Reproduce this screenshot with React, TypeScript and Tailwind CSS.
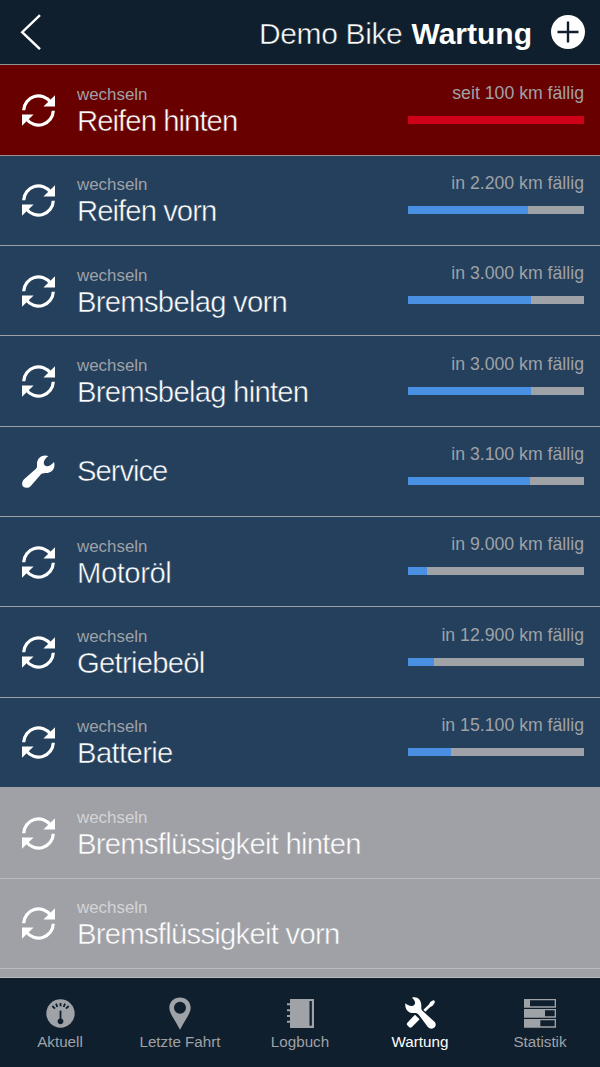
import React from "react";

type Status = "overdue" | "active" | "inactive";

interface Task {
  name: string;
  action?: string;
  due?: string;
  progress?: number;
  status: Status;
  tracking?: string;
}

const tasks: Task[] = [
  { name: "Reifen hinten", action: "wechseln", due: "seit 100 km fällig", progress: 100, status: "overdue", tracking: "tracking-[-0.95px]" },
  { name: "Reifen vorn", action: "wechseln", due: "in 2.200 km fällig", progress: 68, status: "active", tracking: "tracking-[-0.95px]" },
  { name: "Bremsbelag vorn", action: "wechseln", due: "in 3.000 km fällig", progress: 70, status: "active" },
  { name: "Bremsbelag hinten", action: "wechseln", due: "in 3.000 km fällig", progress: 70, status: "active" },
  { name: "Service", due: "in 3.100 km fällig", progress: 69.3, status: "active", tracking: "tracking-[-1.05px]" },
  { name: "Motoröl", action: "wechseln", due: "in 9.000 km fällig", progress: 11, status: "active", tracking: "tracking-[-0.5px]" },
  { name: "Getriebeöl", action: "wechseln", due: "in 12.900 km fällig", progress: 14.5, status: "active" },
  { name: "Batterie", action: "wechseln", due: "in 15.100 km fällig", progress: 24.2, status: "active", tracking: "tracking-[-0.65px]" },
  { name: "Bremsflüssigkeit hinten", action: "wechseln", status: "inactive" },
  { name: "Bremsflüssigkeit vorn", action: "wechseln", status: "inactive" },
];

const rowStyles: Record<Status, string> = {
  overdue: "bg-[#690000] border-[#9b8f92]",
  active: "bg-[#24405c] border-[#9fa2a7]",
  inactive: "bg-[#9fa1a6] border-[#b8babd]",
};

// A stroke in the row colour slims the regular weight down to a light one.
const titleStyles: Record<Status, string> = {
  overdue: "[-webkit-text-stroke:0.5px_#690000]",
  active: "[-webkit-text-stroke:0.5px_#24405c]",
  inactive: "[-webkit-text-stroke:0.5px_#9fa1a6]",
};

function RefreshIcon() {
  return (
    <svg width="33" height="33" viewBox="0 0 33 33" fill="none">
      <path d="M1.7 16.2A14.8 14.8 0 0 1 28.6 8.2" stroke="#fff" strokeWidth="3.2" />
      <path d="M31.3 16.8A14.8 14.8 0 0 1 4.4 24.8" stroke="#fff" strokeWidth="3.2" />
      <path d="M33 1.2V12.4H21.4ZM0 31.8V20.6H11.6Z" fill="#fff" />
    </svg>
  );
}

function WrenchIcon() {
  return (
    <svg width="33" height="33" viewBox="0 0 99 99" fill="#fff">
      <path d="M79 3C66 13 62 24 68 31C75 38 86 32 96 21C101 38 92 52 77 54C68 55 62 53 57 58L27 92C20 100 10 100 4 95C-2 89 0 78 7 72L42 41C46 37 45 32 45 25C46 8 62-3 79 3Z" />
    </svg>
  );
}

function TaskRow({ task }: { task: Task }) {
  return (
    <li className={`flex h-[90.36px] shrink-0 items-center border-b pl-[22px] pr-4 ${rowStyles[task.status]}`}>
      <div className="w-[55px] shrink-0 pt-px">{task.action ? <RefreshIcon /> : <WrenchIcon />}</div>
      <div className="flex flex-1 flex-col">
        {task.action && (
          <span
            className={`mt-px text-[16.9px] leading-5 ${task.status === "inactive" ? "text-[#d3d4d6]" : "text-[#9fa2a7]"}`}
          >
            {task.action}
          </span>
        )}
        <span
          className={`whitespace-nowrap text-[29.3px] text-white ${task.action ? "leading-[31px]" : "leading-8"} ${task.tracking ?? "tracking-[-0.76px]"} ${titleStyles[task.status]}`}
        >
          {task.name}
        </span>
      </div>
      {task.due && (
        <div className="flex w-44 flex-col items-end gap-[13px] self-start pt-[17.3px]">
          <span className="whitespace-nowrap text-[17.7px] leading-5 text-[#9fa2a7]">{task.due}</span>
          <div className="h-2 w-full bg-[#9fa2a7]">
            <div
              className={`h-full ${task.status === "overdue" ? "bg-[#d0021b]" : "bg-[#4a90e2]"}`}
              style={{ width: `${task.progress}%` }}
            />
          </div>
        </div>
      )}
    </li>
  );
}

function GaugeIcon() {
  return (
    <svg width="29" height="29" viewBox="0 0 87 87">
      <circle cx="43.5" cy="43.5" r="42.5" fill="currentColor" />
      <g stroke="#101f2d" strokeWidth="5.5">
        <path d="M43.5 12V22M30 14L34 24M57 14L53 24M19 21L27 29M68 21L60 29" />
        <path d="M43.5 35V68" />
      </g>
      <circle cx="43.5" cy="67" r="8.5" fill="#101f2d" />
    </svg>
  );
}

function PinIcon() {
  return (
    <svg width="22" height="33" viewBox="0 0 66 98">
      <path
        d="M33 1C14 1 1 15 1 32C1 50 19 69 33 98C47 69 65 50 65 32C65 15 52 1 33 1ZM33 14A18 18 0 1 1 33 50A18 18 0 1 1 33 14Z"
        fill="currentColor"
        fillRule="evenodd"
      />
    </svg>
  );
}

function LogbookIcon() {
  return (
    <svg width="27" height="29" viewBox="0 0 81 87">
      <path d="M9 0H81V87H9Z" fill="currentColor" />
      <path d="M0 16H12M0 33.5H12M0 51H12M0 68.5H12" stroke="currentColor" strokeWidth="6" />
      <path d="M71 6V80" stroke="#101f2d" strokeWidth="7" />
    </svg>
  );
}

function ToolsIcon() {
  return (
    <svg width="31" height="32" viewBox="0 0 93 96" fill="currentColor">
      <path d="M58 41L76 24" stroke="currentColor" strokeWidth="8" />
      <path d="M71 24L76 15Q84 9 87 10Q91 14 89 17L83 26L76 30Z" />
      <path d="M30 53L44 67L20 91Q16 94 12 90L7 85Q4 81 7 77Z" />
      <path d="M21 2C29 9 33 17 28 23C21 31 12 27 1 19C-1 37 10 49 26 48C33 47 37 48 41 53L68 89C74 96 83 97 89 91C94 86 93 78 87 73L53 42C48 38 49 33 49 26C49 8 36-3 21 2Z" />
    </svg>
  );
}

function StatsIcon() {
  return (
    <svg width="32" height="29" viewBox="0 0 96 87">
      <g fill="none" stroke="currentColor" strokeWidth="4">
        <path d="M2 2H94V24H2ZM2 32H94V54H2ZM2 62H94V84H2Z" />
      </g>
      <path d="M2 2H18V24H2ZM2 32H63V54H2ZM2 62H49V84H2Z" fill="currentColor" />
    </svg>
  );
}

const tabs = [
  { label: "Aktuell", icon: <GaugeIcon /> },
  { label: "Letzte Fahrt", icon: <PinIcon /> },
  { label: "Logbuch", icon: <LogbookIcon /> },
  { label: "Wartung", icon: <ToolsIcon />, active: true },
  { label: "Statistik", icon: <StatsIcon /> },
];

export default function App() {
  return (
    <div className="flex h-[1067px] w-[600px] flex-col overflow-hidden bg-[#101f2d] font-['Liberation_Sans',Arial,sans-serif]">
      <header className="flex h-[65.3px] shrink-0 items-center border-b border-[#8f9296] pl-5 pr-[15px]">
        <svg width="22" height="36" viewBox="0 0 22 36" fill="none" className="mr-auto">
          <path d="M20 1.2L2.2 18.2L20 35.2" stroke="#fff" strokeWidth="2.4" />
        </svg>
        <h1 className="mt-1 flex gap-[9px] whitespace-nowrap text-[30px] leading-9 text-white">
          <span className="tracking-[-0.35px] [-webkit-text-stroke:0.5px_#101f2d]">Demo Bike</span>
          <span className="font-bold">Wartung</span>
        </h1>
        <svg width="34" height="34" viewBox="0 0 34 34" className="ml-[19px]">
          <circle cx="17" cy="17" r="17" fill="#fff" />
          <path d="M17 6.5V27.5M6.5 17H27.5" stroke="#101f2d" strokeWidth="2.4" />
        </svg>
      </header>
      <main className="min-h-0 flex-1 overflow-hidden bg-[#9fa1a6]">
        <ul className="flex flex-col">
          {tasks.map((task) => (
            <TaskRow key={task.name} task={task} />
          ))}
        </ul>
      </main>
      <nav className="grid h-[90px] shrink-0 grid-cols-5 border-t border-[#b8babd]">
        {tabs.map((tab) => (
          <div
            key={tab.label}
            className={`flex flex-col items-center pt-[18px] ${tab.active ? "text-white" : "text-[#9fa2a7]"}`}
          >
            <div className="flex h-[34px] items-center">{tab.icon}</div>
            <span className="mt-0.5 whitespace-nowrap text-[15.2px] leading-5">{tab.label}</span>
          </div>
        ))}
      </nav>
    </div>
  );
}
